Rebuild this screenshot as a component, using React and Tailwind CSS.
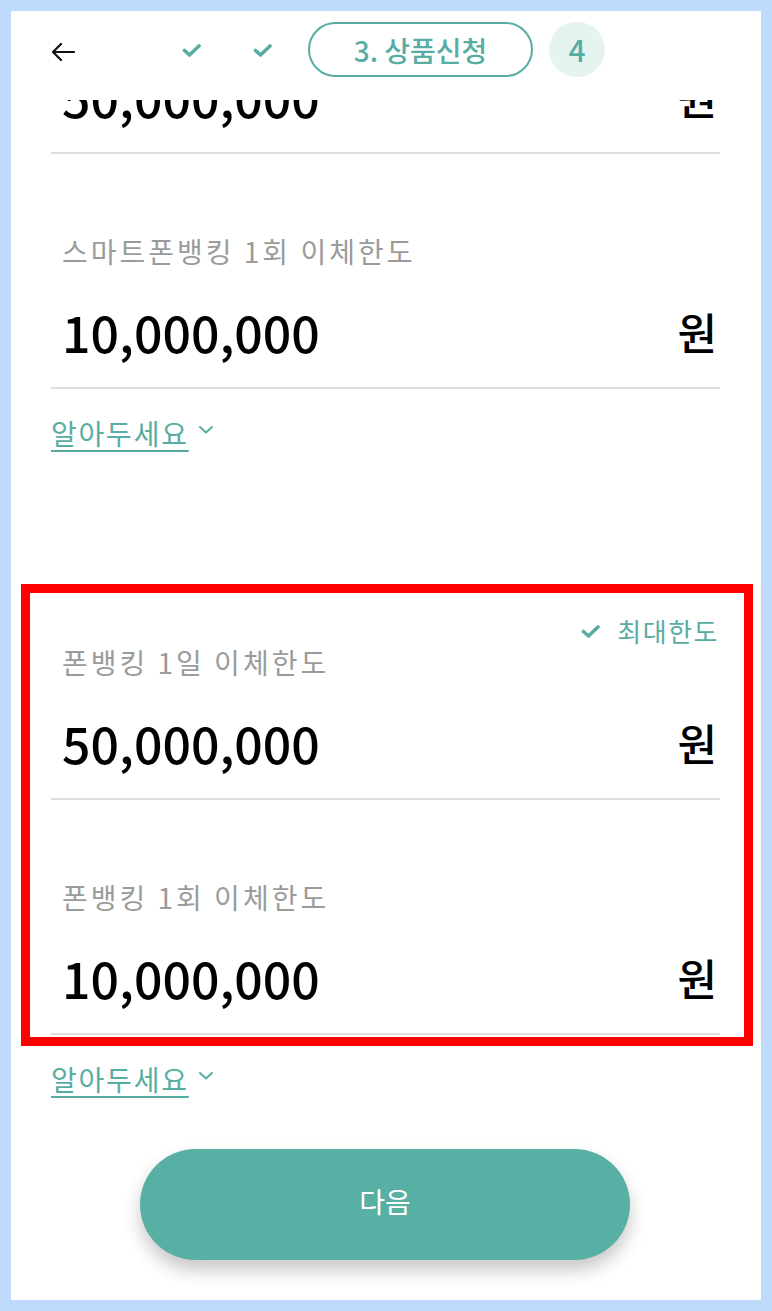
import React from 'react';

/**
 * Small bold check used in the stepper and the "최대한도" toggle
 */
function Check({ className = '' }) {
  return (
    <svg className={className} width="20" height="15" viewBox="0 0 20 15" fill="none">
      <path d="M2.5 7.5 L7.5 12 L17 3" stroke="#58ada3" strokeWidth="3.6" strokeLinecap="round" strokeLinejoin="round" />
    </svg>
  );
}

function Chevron() {
  return (
    <svg width="16" height="10" viewBox="0 0 16 10" fill="none">
      <path d="M2 2 L8 7.5 L14 2" stroke="#58ada3" strokeWidth="2" strokeLinecap="round" strokeLinejoin="round" />
    </svg>
  );
}

function Header() {
  return (
    <header className="h-[89px] pt-[11px] flex items-start bg-white">
      <div className="h-[55px] w-full flex items-center">
        <button className="ml-[39px] mt-[5px] w-[25px] h-[24px] flex items-center justify-center">
          <svg width="24" height="20" viewBox="0 0 24 20" fill="none">
            <path d="M23 10 H2 M10 2 L2 10 L10 18" stroke="#111" strokeWidth="2.2" strokeLinecap="round" strokeLinejoin="round" />
          </svg>
        </button>
        <Check className="ml-[107px] mt-[1px]" />
        <Check className="ml-[51px] mt-[1px]" />
        <div className="ml-[35px] w-[225px] h-[55px] rounded-full border-2 border-[#58ada3] flex items-center justify-center text-[#58ada3] text-[28px] font-medium">
          3. 상품신청
        </div>
        <div className="ml-[16px] w-[56px] h-[55px] rounded-full bg-[#e6f4f1] flex items-center justify-center text-[#58ada3] text-[30px] font-medium">
          4
        </div>
      </div>
    </header>
  );
}

function AmountRow({ value }) {
  return (
    <div className="h-[60px] flex items-center justify-between pl-[11px] pr-[3px] text-black font-medium">
      <span className="text-[50px] leading-[60px]">{value}</span>
      <span className="text-[43px] leading-[60px]">원</span>
    </div>
  );
}

function LimitField({ label, value }) {
  return (
    <div className="pt-[77px] pb-[26px] border-b-2 border-[#dddddd]">
      <div className="pl-[11px] text-[28px] leading-[40px] tracking-[3px] text-[#9b9b9b]">{label}</div>
      <div className="mt-[30px]">
        <AmountRow value={value} />
      </div>
    </div>
  );
}

function NoticeLink({ className = '' }) {
  return (
    <div className={`flex items-center h-[40px] ${className}`}>
      <span className="text-[28px] leading-[40px] tracking-[1.8px] text-[#58ada3] underline underline-offset-[5px] decoration-2">알아두세요</span>
      <span className="ml-[9px] -mt-[6px]">
        <Chevron />
      </span>
    </div>
  );
}

export default function App() {
  return (
    <div
      className="min-h-[1311px] bg-[#c0dafd] p-[11px]"
      style={{ fontFamily: '"Noto Sans CJK KR", "Noto Sans", sans-serif' }}
    >
      <div className="bg-white h-[1289px] flex flex-col">
        <Header />

        <div className="pl-[40px] pr-[41px]">
          {/* scrolled under the header */}
          <div className="h-[52px] overflow-hidden border-b-2 border-[#dddddd] box-content">
            <div className="-mt-[34px]">
              <AmountRow value="50,000,000" />
            </div>
          </div>

          <LimitField label="스마트폰뱅킹 1회 이체한도" value="10,000,000" />
          <NoticeLink className="mt-[24px]" />
        </div>

        {/* highlighted phone banking block */}
        <div className="mt-[131px] ml-[10px] mr-[8px] border-[9px] border-[#ff0000] pl-[21px] pr-[24px] pt-[22px] pb-[2px]">
          <div className="h-[32px] flex items-center justify-end gap-[16px] pr-[1px]">
            <Check className="mt-[1px]" />
            <span className="text-[26px] leading-[32px] tracking-[1.5px] text-[#58ada3]">최대한도</span>
          </div>
          <div className="-mt-[82px]">
            <LimitField label="폰뱅킹 1일 이체한도" value="50,000,000" />
          </div>
          <LimitField label="폰뱅킹 1회 이체한도" value="10,000,000" />
        </div>

        <div className="pl-[40px]">
          <NoticeLink className="mt-[13px]" />
        </div>

        <div className="mt-[50px] flex justify-center">
          <button className="w-[490px] h-[111px] -ml-[2px] pb-[8px] rounded-full bg-[#58afa3] text-white text-[28px] shadow-[0_10px_18px_rgba(0,0,0,0.22)]">
            다음
          </button>
        </div>
      </div>
    </div>
  );
}
